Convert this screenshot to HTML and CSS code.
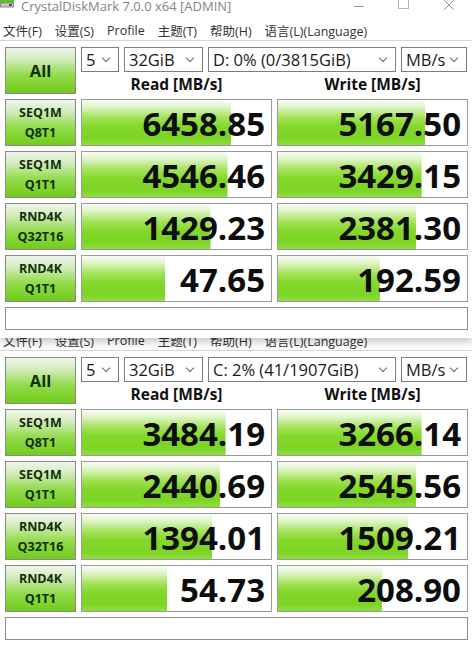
FILE: index.html
```html
<!DOCTYPE html>
<html lang="zh">

<head>
    <meta charset="UTF-8">
    <meta name="viewport" content="width=device-width, initial-scale=1.0">
    <title>CrystalDiskMark</title>
    <link rel="stylesheet" href="styles.css">
</head>

<body>
    <!-- first run: D: drive -->
    <div class="window front">
        <div class="titlebar">
            <svg class="app-icon" width="15" height="8" viewBox="0 0 15 8">
                <rect x="0" y="0" width="14" height="3" fill="#5cbf2a" />
                <rect x="0.5" y="3" width="13" height="4" fill="#c9c9c9" stroke="#8a8a8a" stroke-width="1" />
                <rect x="9" y="4" width="3" height="2" fill="#555" />
            </svg>
            <span class="title">CrystalDiskMark 7.0.0 x64 [ADMIN]</span>
            <svg class="controls" width="114" height="19" viewBox="0 0 114 19">
                <line x1="0" y1="6.5" x2="10" y2="6.5" stroke="#9a9a9a" stroke-width="1" />
                <rect x="44.5" y="-2.5" width="10" height="11" fill="none" stroke="#b5b5b5" stroke-width="1" />
                <path d="M90 0 L100 10 M100 0 L90 10" stroke="#9a9a9a" stroke-width="1" />
            </svg>
        </div>
        <div class="menubar">
            <span>文件(F)</span>
            <span>设置(S)</span>
            <span>Profile</span>
            <span>主题(T)</span>
            <span>帮助(H)</span>
            <span>语言(L)(Language)</span>
        </div>
        <div class="panel">
            <div class="head">
                <div class="btn all">All</div>
                <div class="head-right">
                    <div class="selects">
                        <div class="select s-count">5<i class="chev"></i></div>
                        <div class="select s-size">32GiB<i class="chev"></i></div>
                        <div class="select s-drive">D: 0% (0/3815GiB)<i class="chev"></i></div>
                        <div class="select s-unit">MB/s<i class="chev"></i></div>
                    </div>
                    <div class="cols">
                        <div>Read [MB/s]</div>
                        <div>Write [MB/s]</div>
                    </div>
                </div>
            </div>
            <div class="row">
                <div class="btn label">SEQ1M<br>Q8T1</div>
                <div class="cell" style="--fill: 79%">6458.85</div>
                <div class="cell" style="--fill: 78%">5167.50</div>
            </div>
            <div class="row">
                <div class="btn label">SEQ1M<br>Q1T1</div>
                <div class="cell" style="--fill: 77%">4546.46</div>
                <div class="cell" style="--fill: 76%">3429.15</div>
            </div>
            <div class="row">
                <div class="btn label">RND4K<br>Q32T16</div>
                <div class="cell" style="--fill: 68%">1429.23</div>
                <div class="cell" style="--fill: 73%">2381.30</div>
            </div>
            <div class="row">
                <div class="btn label">RND4K<br>Q1T1</div>
                <div class="cell" style="--fill: 44%">47.65</div>
                <div class="cell" style="--fill: 54%">192.59</div>
            </div>
            <div class="comment"></div>
        </div>
    </div>

    <!-- second run: C: drive, menu partly under the first window -->
    <div class="window back">
        <div class="menubar">
            <span>文件(F)</span>
            <span>设置(S)</span>
            <span>Profile</span>
            <span>主题(T)</span>
            <span>帮助(H)</span>
            <span>语言(L)(Language)</span>
        </div>
        <div class="panel">
            <div class="head">
                <div class="btn all">All</div>
                <div class="head-right">
                    <div class="selects">
                        <div class="select s-count">5<i class="chev"></i></div>
                        <div class="select s-size">32GiB<i class="chev"></i></div>
                        <div class="select s-drive">C: 2% (41/1907GiB)<i class="chev"></i></div>
                        <div class="select s-unit">MB/s<i class="chev"></i></div>
                    </div>
                    <div class="cols">
                        <div>Read [MB/s]</div>
                        <div>Write [MB/s]</div>
                    </div>
                </div>
            </div>
            <div class="row">
                <div class="btn label">SEQ1M<br>Q8T1</div>
                <div class="cell" style="--fill: 76%">3484.19</div>
                <div class="cell" style="--fill: 76%">3266.14</div>
            </div>
            <div class="row">
                <div class="btn label">SEQ1M<br>Q1T1</div>
                <div class="cell" style="--fill: 73%">2440.69</div>
                <div class="cell" style="--fill: 73%">2545.56</div>
            </div>
            <div class="row">
                <div class="btn label">RND4K<br>Q32T16</div>
                <div class="cell" style="--fill: 69%">1394.01</div>
                <div class="cell" style="--fill: 69%">1509.21</div>
            </div>
            <div class="row">
                <div class="btn label">RND4K<br>Q1T1</div>
                <div class="cell" style="--fill: 45%">54.73</div>
                <div class="cell" style="--fill: 55%">208.90</div>
            </div>
            <div class="comment"></div>
        </div>
    </div>
</body>

</html>
```
FILE: styles.css
```css
* {
    padding: 0;
    margin: 0;
    box-sizing: border-box;
}

body {
    width: 472px;
    height: 645px;
    overflow: hidden;
    background: #fff;
    font-family: "Open Sans", "Noto Sans CJK SC", sans-serif;
    color: #111;
}

.window {
    background: #fff;
}

.front {
    position: relative;
    z-index: 1;
    box-shadow: 0 4px 8px rgba(0, 0, 0, 0.22);
}

.front .panel {
    padding-bottom: 8px;
}

.back {
    margin-top: -9px;
}

/* title bar (top is cut off in the shot) */
.titlebar {
    height: 19px;
    display: flex;
    align-items: flex-start;
}

.app-icon {
    flex: none;
    margin-right: 6px;
}

.title {
    font-size: 13px;
    line-height: 12px;
    color: #858585;
    white-space: nowrap;
}

.controls {
    margin-left: auto;
    margin-right: 4px;
    flex: none;
}

.menubar {
    height: 22px;
    display: flex;
    align-items: center;
    gap: 13px;
    padding: 1px 0 0 3px;
    border-bottom: 1px solid #d6d6d6;
    font-size: 12.5px;
    color: #333;
    white-space: nowrap;
}

.panel {
    padding: 6px 4px 2px 5px;
    display: flex;
    flex-direction: column;
    gap: 5px;
}

.head,
.row {
    display: grid;
    grid-template-columns: 71px 191px 191px;
    column-gap: 5px;
    height: 47px;
}

.btn {
    border: 1px solid #8a8a8a;
    background: linear-gradient(#f0f5ec 0%, #d2ebbb 26%, #93db4b 60%, #72cc1c 100%);
    display: flex;
    align-items: center;
    justify-content: center;
    text-align: center;
    font-weight: bold;
    color: #10300a;
}

.all {
    font-size: 16.5px;
}

.label {
    font-size: 12.5px;
    line-height: 20px;
}

.head-right {
    grid-column: 2 / 4;
    display: flex;
    flex-direction: column;
}

.selects {
    display: flex;
    gap: 5px;
    height: 25px;
}

.select {
    border: 1px solid #7c7c7c;
    background: #fff;
    font-size: 16.5px;
    line-height: 23px;
    padding-left: 4px;
    display: flex;
    align-items: center;
    white-space: nowrap;
    color: #1a1a1a;
}

.s-count {
    width: 38px;
}

.s-size {
    width: 79px;
}

.s-drive {
    width: 188px;
}

.s-unit {
    width: 66px;
}

.chev {
    margin-left: auto;
    margin-right: 9px;
    width: 6px;
    height: 6px;
    border-right: 1px solid #6a6a6a;
    border-bottom: 1px solid #6a6a6a;
    transform: translateY(-2px) rotate(45deg);
}

.cols {
    flex: 1;
    display: grid;
    grid-template-columns: 191px 191px;
    column-gap: 5px;
    align-items: end;
}

.cols div {
    text-align: center;
    font-weight: bold;
    font-size: 15.5px;
    line-height: 20px;
}

.cell {
    border: 1px solid #9a9a9a;
    background: linear-gradient(#fafdf6 0%, #e0f4ca 15%, #a6e35c 38%, #84d82c 58%, #7cd424 85%, #8fdf40 100%) no-repeat, #fff;
    background-size: var(--fill) 100%;
    display: flex;
    align-items: center;
    justify-content: flex-end;
    padding: 2px 6px 0 0;
    font-size: 33px;
    font-weight: bold;
    line-height: 1;
    color: #0d0d0d;
}

.comment {
    height: 23px;
    border: 1px solid #8f8f8f;
    background: #fff;
}
```
